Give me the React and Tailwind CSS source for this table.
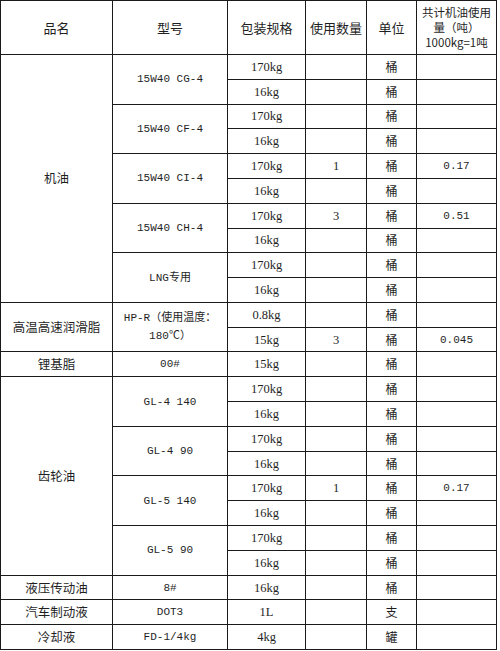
import React from "react";

const cjk = "font-['Noto_Sans_CJK_SC',sans-serif]";
const mono = "font-['Liberation_Mono','Noto_Sans_CJK_SC',monospace]";
const serif = "font-['Liberation_Serif','Noto_Sans_CJK_SC',serif]";

const Cell = ({ className = "", children }) => (
  <div
    className={`bg-white flex items-center justify-center text-center text-[#1f1f1f] leading-[14px] ${className}`}
  >
    {children}
  </div>
);

// one data row: package, qty, unit, total
const Tail = ({ pack, qty = "", unit = "桶", total = "" }) => (
  <>
    <Cell className={`${serif} text-[12.5px]`}>{pack}</Cell>
    <Cell className={`${serif} text-[12.5px]`}>{qty}</Cell>
    <Cell className={`${cjk} text-[12px]`}>{unit}</Cell>
    <Cell className={`${mono} text-[11px]`}>{total}</Cell>
  </>
);

const Model = ({ span = "row-span-2", children }) => (
  <Cell className={`${span} ${mono} text-[11px]`}>{children}</Cell>
);

const Category = ({ span, children }) => (
  <Cell className={`${span} ${cjk} text-[12.5px]`}>{children}</Cell>
);

export default function App() {
  return (
    <div className="w-[500px] h-[651px] bg-white">
      <div className="grid w-[497px] h-[650px] bg-[#1a1a1a] p-px gap-px grid-cols-[111px_114px_77px_60px_49px_79px] grid-rows-[53px_repeat(24,minmax(0,1fr))]">
        {/* header */}
        <Cell className={`${cjk} text-[13px]`}>品名</Cell>
        <Cell className={`${cjk} text-[13px]`}>型号</Cell>
        <Cell className={`${cjk} text-[13px]`}>包装规格</Cell>
        <Cell className={`${cjk} text-[13px]`}>使用数量</Cell>
        <Cell className={`${cjk} text-[13px]`}>单位</Cell>
        <Cell className={`${cjk} text-[11.5px] flex-col leading-[15px]`}>
          <span>共计机油使用</span>
          <span>量（吨）</span>
          <span>1000kg=1吨</span>
        </Cell>

        {/* 机油 */}
        <Category span="row-span-10">机油</Category>
        <Model>15W40 CG-4</Model>
        <Tail pack="170kg" />
        <Tail pack="16kg" />
        <Model>15W40 CF-4</Model>
        <Tail pack="170kg" />
        <Tail pack="16kg" />
        <Model>15W40 CI-4</Model>
        <Tail pack="170kg" qty="1" total="0.17" />
        <Tail pack="16kg" />
        <Model>15W40 CH-4</Model>
        <Tail pack="170kg" qty="3" total="0.51" />
        <Tail pack="16kg" />
        <Model>LNG专用</Model>
        <Tail pack="170kg" />
        <Tail pack="16kg" />

        {/* 高温高速润滑脂 */}
        <Category span="row-span-2">高温高速润滑脂</Category>
        <Cell className={`row-span-2 ${mono} text-[11px] flex-col leading-[18px]`}>
          <span>HP-R（使用温度：</span>
          <span>180℃）</span>
        </Cell>
        <Tail pack="0.8kg" />
        <Tail pack="15kg" qty="3" total="0.045" />

        {/* 锂基脂 */}
        <Category span="row-span-1">锂基脂</Category>
        <Model span="row-span-1">00#</Model>
        <Tail pack="15kg" />

        {/* 齿轮油 */}
        <Category span="row-span-8">齿轮油</Category>
        <Model>GL-4 140</Model>
        <Tail pack="170kg" />
        <Tail pack="16kg" />
        <Model>GL-4 90</Model>
        <Tail pack="170kg" />
        <Tail pack="16kg" />
        <Model>GL-5 140</Model>
        <Tail pack="170kg" qty="1" total="0.17" />
        <Tail pack="16kg" />
        <Model>GL-5 90</Model>
        <Tail pack="170kg" />
        <Tail pack="16kg" />

        {/* others */}
        <Category span="row-span-1">液压传动油</Category>
        <Model span="row-span-1">8#</Model>
        <Tail pack="16kg" />
        <Category span="row-span-1">汽车制动液</Category>
        <Model span="row-span-1">DOT3</Model>
        <Tail pack="1L" unit="支" />
        <Category span="row-span-1">冷却液</Category>
        <Model span="row-span-1">FD-1/4kg</Model>
        <Tail pack="4kg" unit="罐" />
      </div>
    </div>
  );
}
